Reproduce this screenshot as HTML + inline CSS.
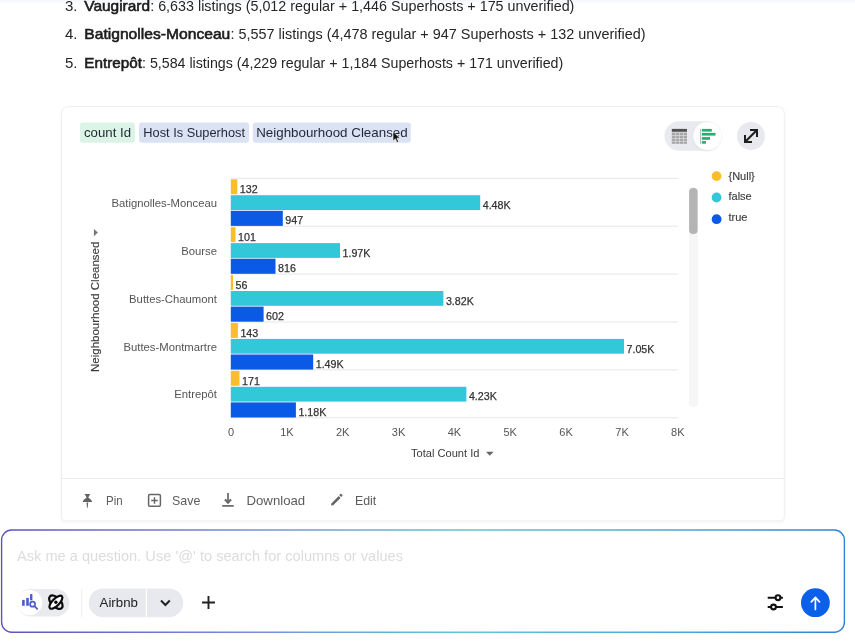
<!DOCTYPE html>
<html><head><meta charset="utf-8">
<style>
html,body{margin:0;padding:0;background:#fff;width:855px;height:644px;overflow:hidden}
svg{display:block;will-change:transform;font-family:"Liberation Sans",sans-serif}
.li{font-size:15px;fill:#262626}
.b{font-weight:normal;font-size:15px;fill:#1c1c1c;stroke:#1c1c1c;stroke-width:0.6}
.val{font-size:10.7px;fill:#333;stroke:#333;stroke-width:0.25}
.cat{font-size:11.3px;fill:#555}
.leg{font-size:11px;fill:#3f3f3f;stroke:#3f3f3f;stroke-width:0.15}
.tick{font-size:11px;fill:#555}
.chip{font-size:13px;fill:#1e2733}
.tb{font-size:13px;fill:#5c5c5c}
</style></head><body>
<svg width="855" height="644" viewBox="0 0 855 644">
<defs>
<linearGradient id="bord" x1="0" y1="0" x2="855" y2="0" gradientUnits="userSpaceOnUse">
<stop offset="0" stop-color="#5f52be"/>
<stop offset="0.3" stop-color="#7a8fd8"/>
<stop offset="0.55" stop-color="#5ec6d4"/>
<stop offset="0.8" stop-color="#4aa6d8"/>
<stop offset="1" stop-color="#2f7fd6"/>
</linearGradient>
<filter id="sh" x="-5%" y="-5%" width="110%" height="110%"><feDropShadow dx="0" dy="1" stdDeviation="1.2" flood-color="#000" flood-opacity="0.06"/></filter>
<linearGradient id="topg" x1="0" y1="0" x2="0" y2="1"><stop offset="0" stop-color="#f2f7fc"/><stop offset="1" stop-color="#ffffff"/></linearGradient>
</defs>
<rect x="0" y="0" width="855" height="4" fill="url(#topg)"/>
<!-- list -->
<text class="li" x="65" y="10.6">3.</text>
<text class="li" y="10.6"><tspan x="84.3" class="b" textLength="65.7" lengthAdjust="spacingAndGlyphs">Vaugirard</tspan><tspan x="150.2" textLength="424.2" lengthAdjust="spacingAndGlyphs">: 6,633 listings (5,012 regular + 1,446 Superhosts + 175 unverified)</tspan></text>
<text class="li" x="65" y="39.3">4.</text>
<text class="li" y="39.3"><tspan x="84.3" class="b" textLength="146" lengthAdjust="spacingAndGlyphs">Batignolles-Monceau</tspan><tspan x="230.5" textLength="415" lengthAdjust="spacingAndGlyphs">: 5,557 listings (4,478 regular + 947 Superhosts + 132 unverified)</tspan></text>
<text class="li" x="65" y="68.4">5.</text>
<text class="li" y="68.4"><tspan x="84.3" class="b" textLength="57.6" lengthAdjust="spacingAndGlyphs">Entrepôt</tspan><tspan x="142" textLength="421.2" lengthAdjust="spacingAndGlyphs">: 5,584 listings (4,229 regular + 1,184 Superhosts + 171 unverified)</tspan></text>

<!-- card -->
<path d="M69.5 106.5 H776.3 Q784.3 106.5 784.3 114.5 V516.3 Q784.3 520.8 779.8 520.8 H66 Q61.5 520.8 61.5 516.3 V114.5 Q61.5 106.5 69.5 106.5 Z" fill="#fff" stroke="#efefef" stroke-width="1" filter="url(#sh)"/>
<line x1="62" y1="478.5" x2="784" y2="478.5" stroke="#ececec" stroke-width="1"/>

<!-- chips -->
<rect x="80" y="122.4" width="55" height="20.4" rx="3" fill="#dcf4e6"/>
<text class="chip" x="84" y="136.6" textLength="47" lengthAdjust="spacingAndGlyphs">count Id</text>
<rect x="139" y="122.4" width="110" height="20.4" rx="3" fill="#dbe2f4"/>
<text class="chip" x="143.3" y="136.6" textLength="101.7" lengthAdjust="spacingAndGlyphs">Host Is Superhost</text>
<rect x="252.8" y="122.4" width="158" height="20.4" rx="3" fill="#dbe2f4"/>
<text class="chip" x="256.2" y="136.6" textLength="151.5" lengthAdjust="spacingAndGlyphs">Neighbourhood Cleansed</text>

<!-- toggle top right -->
<rect x="664.5" y="121.3" width="57" height="29.5" rx="14.75" fill="#e8eaef"/>
<circle cx="707.4" cy="136" r="14" fill="#fff" filter="url(#sh)"/>
<rect x="671.8" y="128.9" width="15.2" height="2.9" fill="#505050"/>
<rect x="671.8" y="132.6" width="15.2" height="11.2" fill="#a6a6a6"/>
<g fill="#e4e4e8">
<rect x="675.5" y="132.6" width="0.6" height="11.2"/>
<rect x="679.3" y="132.6" width="0.6" height="11.2"/>
<rect x="683.1" y="132.6" width="0.6" height="11.2"/>
<rect x="671.8" y="135.3" width="15.2" height="0.6"/>
<rect x="671.8" y="138.1" width="15.2" height="0.6"/>
<rect x="671.8" y="140.9" width="15.2" height="0.6"/>
</g>
<rect x="700.1" y="128.8" width="0.7" height="15" fill="#9aa5a0"/>
<g fill="#23b173">
<rect x="701.8" y="128.9" width="10" height="2.7"/>
<rect x="701.8" y="132.9" width="13.7" height="2.7"/>
<rect x="701.8" y="137.1" width="8.2" height="2.7"/>
<rect x="701.8" y="141.1" width="4.2" height="2.6"/>
</g>
<circle cx="751" cy="136" r="14" fill="#e8e9ee"/>
<g stroke="#1e1e1e" stroke-width="2" fill="none" stroke-linecap="square">
<line x1="745.5" y1="141.5" x2="756.5" y2="130.5"/>
<polyline points="745,136 745,142 751,142"/>
<polyline points="751,130 757,130 757,136"/>
</g>

<!-- chart -->
<line x1="231" y1="178.3" x2="678" y2="178.3" stroke="#e7e7e7" stroke-width="1"/>
<line x1="231" y1="226.2" x2="678" y2="226.2" stroke="#e7e7e7" stroke-width="1"/>
<line x1="231" y1="274.1" x2="678" y2="274.1" stroke="#e7e7e7" stroke-width="1"/>
<line x1="231" y1="322.0" x2="678" y2="322.0" stroke="#e7e7e7" stroke-width="1"/>
<line x1="231" y1="369.9" x2="678" y2="369.9" stroke="#e7e7e7" stroke-width="1"/>
<line x1="231" y1="417.8" x2="678" y2="417.8" stroke="#e7e7e7" stroke-width="1"/>
<rect x="230.8" y="179.3" width="6.5" height="14.9" fill="#fbbd2c"/>
<text x="239.8" y="192.9" class="val">132</text>
<rect x="230.8" y="195.2" width="249.4" height="14.8" fill="#33c8d9"/>
<text x="482.7" y="208.8" class="val">4.48K</text>
<rect x="230.8" y="210.8" width="52.0" height="15.1" fill="#0a5ae6"/>
<text x="285.3" y="224.4" class="val">947</text>
<text x="217" y="206.8" class="cat" text-anchor="end">Batignolles-Monceau</text>
<rect x="230.8" y="227.2" width="4.7" height="14.9" fill="#fbbd2c"/>
<text x="238.0" y="240.8" class="val">101</text>
<rect x="230.8" y="243.1" width="109.2" height="14.8" fill="#33c8d9"/>
<text x="342.5" y="256.7" class="val">1.97K</text>
<rect x="230.8" y="258.7" width="44.7" height="15.1" fill="#0a5ae6"/>
<text x="278.0" y="272.3" class="val">816</text>
<text x="217" y="254.7" class="cat" text-anchor="end">Bourse</text>
<rect x="230.8" y="275.1" width="2.2" height="14.9" fill="#fbbd2c"/>
<text x="235.5" y="288.7" class="val">56</text>
<rect x="230.8" y="291.0" width="212.6" height="14.8" fill="#33c8d9"/>
<text x="445.9" y="304.6" class="val">3.82K</text>
<rect x="230.8" y="306.6" width="32.8" height="15.1" fill="#0a5ae6"/>
<text x="266.1" y="320.2" class="val">602</text>
<text x="217" y="302.6" class="cat" text-anchor="end">Buttes-Chaumont</text>
<rect x="230.8" y="323.0" width="7.1" height="14.9" fill="#fbbd2c"/>
<text x="240.4" y="336.6" class="val">143</text>
<rect x="230.8" y="338.9" width="393.2" height="14.8" fill="#33c8d9"/>
<text x="626.5" y="352.5" class="val">7.05K</text>
<rect x="230.8" y="354.5" width="82.4" height="15.1" fill="#0a5ae6"/>
<text x="315.7" y="368.1" class="val">1.49K</text>
<text x="217" y="350.5" class="cat" text-anchor="end">Buttes-Montmartre</text>
<rect x="230.8" y="370.9" width="8.7" height="14.9" fill="#fbbd2c"/>
<text x="242.0" y="384.5" class="val">171</text>
<rect x="230.8" y="386.8" width="235.6" height="14.8" fill="#33c8d9"/>
<text x="468.9" y="400.4" class="val">4.23K</text>
<rect x="230.8" y="402.4" width="65.1" height="15.1" fill="#0a5ae6"/>
<text x="298.4" y="416.0" class="val">1.18K</text>
<text x="217" y="398.4" class="cat" text-anchor="end">Entrepôt</text>
<text x="231.0" y="436.3" class="tick" text-anchor="middle">0</text>
<text x="286.9" y="436.3" class="tick" text-anchor="middle">1K</text>
<text x="342.7" y="436.3" class="tick" text-anchor="middle">2K</text>
<text x="398.6" y="436.3" class="tick" text-anchor="middle">3K</text>
<text x="454.4" y="436.3" class="tick" text-anchor="middle">4K</text>
<text x="510.2" y="436.3" class="tick" text-anchor="middle">5K</text>
<text x="566.1" y="436.3" class="tick" text-anchor="middle">6K</text>
<text x="622.0" y="436.3" class="tick" text-anchor="middle">7K</text>
<text x="677.8" y="436.3" class="tick" text-anchor="middle">8K</text>
<text x="411" y="456.6" class="tick" style="fill:#3a3a3a" textLength="68.4" lengthAdjust="spacingAndGlyphs">Total Count Id</text>
<polygon points="486,451.7 493.6,451.7 489.8,455.8" fill="#666"/>
<text transform="translate(99.3,372) rotate(-90)" x="0" y="0" class="cat" style="fill:#3d3d3d;stroke:#3d3d3d;stroke-width:0.15" textLength="130.4" lengthAdjust="spacingAndGlyphs">Neighbourhood Cleansed</text>
<polygon points="93.9,228.9 93.9,236.3 97.9,232.6" fill="#777"/>
<!-- scrollbar -->
<rect x="689" y="187" width="9" height="220" rx="4" fill="#f6f6f6"/>
<rect x="689.1" y="188" width="8.5" height="46" rx="4" fill="#b4b4b4"/>
<!-- legend -->
<circle cx="716.6" cy="176.1" r="4.9" fill="#fbbd2c"/>
<circle cx="716.6" cy="197.5" r="4.9" fill="#33c8d9"/>
<circle cx="716.6" cy="219.2" r="4.9" fill="#0a5ae6"/>
<text x="728.5" y="179.6" class="leg">{Null}</text>
<text x="728.5" y="200.2" class="leg">false</text>
<text x="728.5" y="221.4" class="leg">true</text>

<!-- toolbar -->
<path d="M84.6 494 H90.2 Q89.2 495.8 88.3 497.4 Q91.3 499.2 92.2 502 H82.6 Q83.6 499.2 86.6 497.4 Q85.7 495.8 84.6 494 Z" fill="#636363"/>
<path d="M86.5 502.6 H88.2 L87.7 507.8 H87 Z" fill="#636363"/>
<g stroke="#666" stroke-width="1.5" fill="none">
<rect x="148.6" y="494.6" width="11.8" height="11.6" rx="1.3"/>
<path d="M154.5 497.2 V503.8 M151.2 500.5 H157.8"/>
</g>
<path d="M228 493 V503" stroke="#666" stroke-width="1.7"/>
<path d="M224.6 500 L228 503.8 L231.4 500 L230.3 499.1 L228 501.6 L225.7 499.1 Z" fill="#666" stroke="#666" stroke-width="0.8" stroke-linejoin="round"/>
<path d="M222.2 505.9 H233.7" stroke="#666" stroke-width="1.7"/>
<path d="M331 505.6 L331.4 503.4 L338.7 496.1 L340.5 497.9 L333.2 505.2 Z" fill="#656565"/>
<path d="M339.2 495.1 L340.3 494 Q340.8 493.5 341.4 494 L342.3 494.9 Q342.8 495.5 342.3 496 L341.2 497.1 Z" fill="#656565"/>
<text class="tb" x="106" y="505.2" textLength="16.6" lengthAdjust="spacingAndGlyphs">Pin</text>
<text class="tb" x="172" y="505.2" textLength="28.3" lengthAdjust="spacingAndGlyphs">Save</text>
<text class="tb" x="246.5" y="505.2" textLength="58.7" lengthAdjust="spacingAndGlyphs">Download</text>
<text class="tb" x="355" y="505.2" textLength="21.3" lengthAdjust="spacingAndGlyphs">Edit</text>

<!-- cursor -->
<path d="M393 131.5 L393 141 L395.3 138.8 L397 142.5 L398.6 141.8 L396.9 138.2 L400 138.2 Z" fill="#111" stroke="#fff" stroke-width="0.6"/>

<!-- input box -->
<rect x="1.6" y="530" width="842.8" height="102.2" rx="10" fill="#fff" stroke="url(#bord)" stroke-width="1.4"/>
<text x="17" y="561" style="font-size:14.6px;fill:#dcdcdc" textLength="386" lengthAdjust="spacingAndGlyphs">Ask me a question. Use '@' to search for columns or values</text>
<rect x="17" y="589" width="52.4" height="27.5" rx="13.75" fill="#e9eaee"/>
<circle cx="29.6" cy="602.7" r="12.6" fill="#fff"/>
<g fill="#4d5ec8">
<rect x="22.1" y="599.9" width="2.6" height="5.9"/>
<rect x="26.2" y="597.9" width="2.6" height="7.9"/>
<rect x="30" y="594.1" width="2.4" height="6.2"/>
</g>
<circle cx="32.6" cy="604.2" r="2.5" fill="none" stroke="#4d5ec8" stroke-width="1.7"/>
<line x1="34.5" y1="606.2" x2="37.2" y2="608.9" stroke="#4d5ec8" stroke-width="1.8" stroke-linecap="round"/>
<g transform="translate(55.9 602.2)">
<ellipse cx="0" cy="0" rx="8.3" ry="4.6" transform="rotate(45)" fill="none" stroke="#0a0a0a" stroke-width="2.2"/>
<ellipse cx="0" cy="0" rx="8.5" ry="3.5" transform="rotate(-45)" fill="#fff" stroke="#0a0a0a" stroke-width="2.2"/>
<circle cx="0" cy="0" r="1.7" fill="#0a0a0a"/>
</g>
<line x1="81.7" y1="589" x2="81.7" y2="617" stroke="#eeeeee" stroke-width="1"/>
<rect x="88.8" y="588.4" width="94.4" height="28.8" rx="14.4" fill="#e8e9ee"/>
<line x1="146.3" y1="588.4" x2="146.3" y2="617.2" stroke="#fff" stroke-width="1.2"/>
<text x="99.6" y="606.7" style="font-size:13px;fill:#222" textLength="38.3" lengthAdjust="spacingAndGlyphs">Airbnb</text>
<polyline points="161,600.5 165.4,605 169.8,600.5" fill="none" stroke="#222" stroke-width="2"/>
<path d="M202 602.5 H215 M208.5 596 V609" stroke="#222" stroke-width="1.9"/>
<g stroke="#111" stroke-width="2.1" fill="none">
<path d="M767.7 597.7 H775.5 M780.6 597.7 H782.9"/>
<circle cx="778" cy="597.7" r="2.4"/>
<path d="M767.7 607 H771 M776 607 H782.9"/>
<circle cx="773.5" cy="607" r="2.4"/>
</g>
<circle cx="815.4" cy="602.7" r="14.4" fill="#0c5fe9"/>
<path d="M815.4 609.5 V597.6 M811.3 601.8 L815.4 597.4 L819.5 601.8" stroke="#fff" stroke-width="1.7" fill="none" stroke-linecap="round" stroke-linejoin="round"/>
</svg>
</body></html>
